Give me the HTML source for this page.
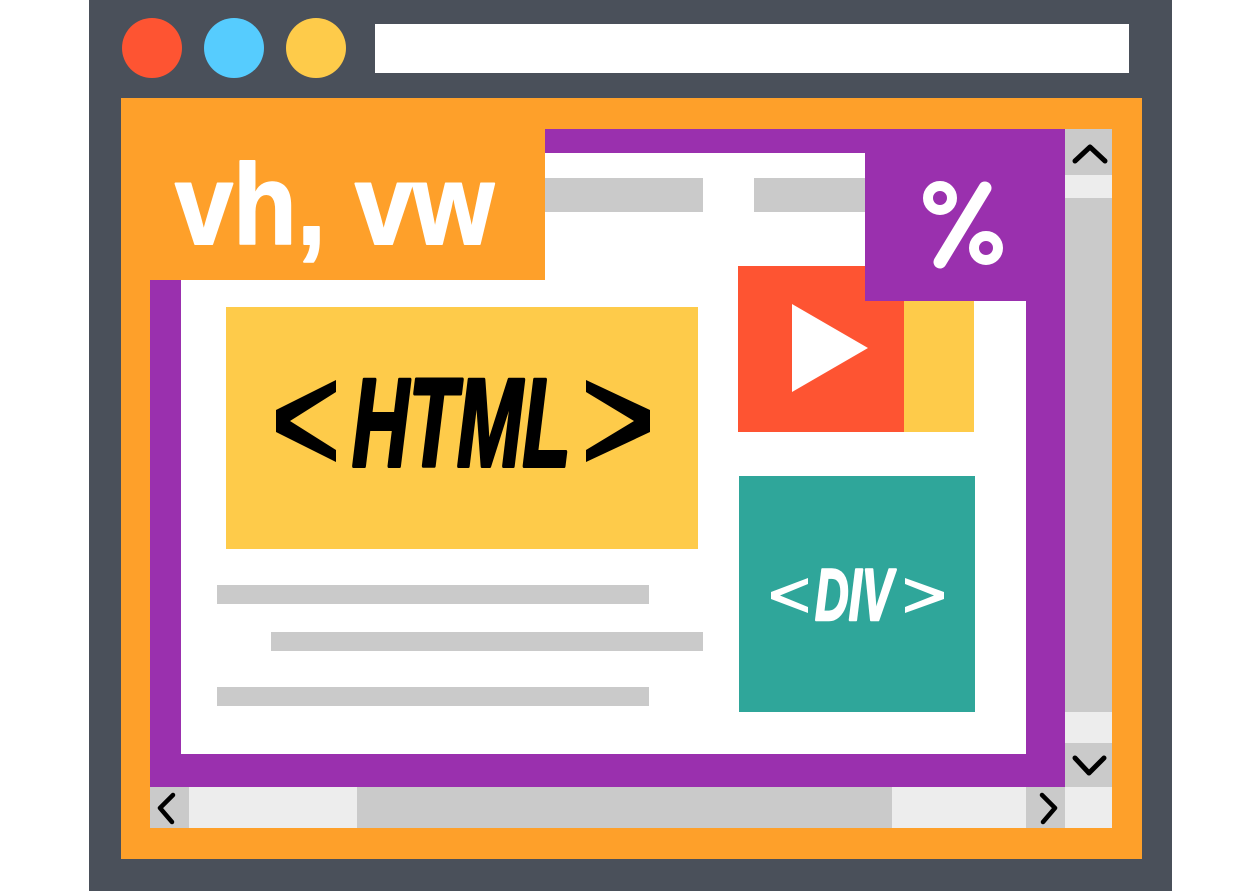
<!DOCTYPE html>
<html><head><meta charset="utf-8"><style>html,body{margin:0;padding:0;background:#fff;width:1260px;height:891px;overflow:hidden}</style></head>
<body>
<svg width="1260" height="891" viewBox="0 0 1260 891" xmlns="http://www.w3.org/2000/svg">
<rect x="89" y="0" width="1083" height="891" fill="#4a505a"/>
<circle cx="152" cy="48" r="30" fill="#fe5432"/>
<circle cx="234" cy="48" r="30" fill="#56ccfe"/>
<circle cx="316" cy="48" r="30" fill="#fecb4a"/>
<rect x="375" y="24" width="754" height="49" fill="#fff"/>
<rect x="121" y="98" width="1021" height="761" fill="#fea02a"/>
<rect x="150" y="129" width="915" height="658" fill="#9a30ae"/>
<rect x="181" y="153" width="845" height="601" fill="#fff"/>
<rect x="1065" y="129" width="47" height="658" fill="#cacaca"/>
<rect x="1065" y="175" width="47" height="23" fill="#ededed"/>
<rect x="1065" y="712" width="47" height="31" fill="#ededed"/>
<path d="M1075 161 L1090 147 L1105 161" stroke="#000" stroke-width="5" fill="none" stroke-linecap="round" stroke-linejoin="round"/>
<path d="M1075 758 L1089 773 L1104 758" stroke="#000" stroke-width="5" fill="none" stroke-linecap="round" stroke-linejoin="round"/>
<rect x="150" y="787" width="962" height="41" fill="#ededed"/>
<rect x="150" y="787" width="39" height="41" fill="#cacaca"/>
<rect x="357" y="787" width="535" height="41" fill="#cacaca"/>
<rect x="1026" y="787" width="39" height="41" fill="#cacaca"/>
<path d="M173 795 L160 808 L172 822" stroke="#000" stroke-width="4.5" fill="none" stroke-linecap="round" stroke-linejoin="round"/>
<path d="M1042 795 L1055 808 L1043 822" stroke="#000" stroke-width="4.5" fill="none" stroke-linecap="round" stroke-linejoin="round"/>
<rect x="121" y="98" width="424" height="182" fill="#fea02a"/>
<text x="0" y="0" transform="translate(175 244) scale(0.87 0.95)" font-family="Liberation Sans, sans-serif" font-weight="bold" font-size="120" fill="#fff" stroke="#fff" stroke-width="2" stroke-linejoin="round">vh, vw</text>
<rect x="545" y="178" width="158" height="34" fill="#cacaca"/>
<rect x="754" y="178" width="111" height="34" fill="#cacaca"/>
<rect x="226" y="307" width="472" height="242" fill="#fecb4a"/>
<path d="M336 380 L276 410 L276 432 L336 462 L336 450 L290 421 L336 392 Z" fill="#000"/>
<path d="M586 380 L650 410 L650 432 L586 462 L586 450 L634 421 L586 392 Z" fill="#000"/>
<text x="0" y="0" transform="translate(352 466) scale(0.63 1)" font-family="Liberation Sans, sans-serif" font-weight="bold" font-style="italic" font-size="125" fill="#000" stroke="#000" stroke-width="4" stroke-linejoin="round">HTML</text>
<rect x="738" y="266" width="166" height="166" fill="#fe5432"/>
<rect x="904" y="266" width="70" height="166" fill="#fecb4a"/>
<path d="M792 304 L868 348 L792 392 Z" fill="#fff"/>
<rect x="865" y="152" width="200" height="149" fill="#9a30ae"/>
<circle cx="940" cy="198" r="12" fill="none" stroke="#fff" stroke-width="10"/>
<circle cx="986" cy="248" r="12" fill="none" stroke="#fff" stroke-width="10"/>
<path d="M985 188 L940 262" stroke="#fff" stroke-width="13" stroke-linecap="round"/>
<rect x="739" y="476" width="236" height="236" fill="#2fa69a"/>
<path d="M808 578 L771 592 L771 599 L808 613 L808 607 L780 595.5 L808 584 Z" fill="#fff"/>
<path d="M905 578 L944 592 L944 599 L905 613 L905 607 L934 595.5 L905 584 Z" fill="#fff"/>
<text x="0" y="0" transform="translate(815 620) scale(0.64 1)" font-family="Liberation Sans, sans-serif" font-weight="bold" font-style="italic" font-size="73" fill="#fff" stroke="#fff" stroke-width="2.5" stroke-linejoin="round">DIV</text>
<rect x="217" y="585" width="432" height="19" fill="#cacaca"/>
<rect x="271" y="632" width="432" height="19" fill="#cacaca"/>
<rect x="217" y="687" width="432" height="19" fill="#cacaca"/>
</svg>
</body></html>
